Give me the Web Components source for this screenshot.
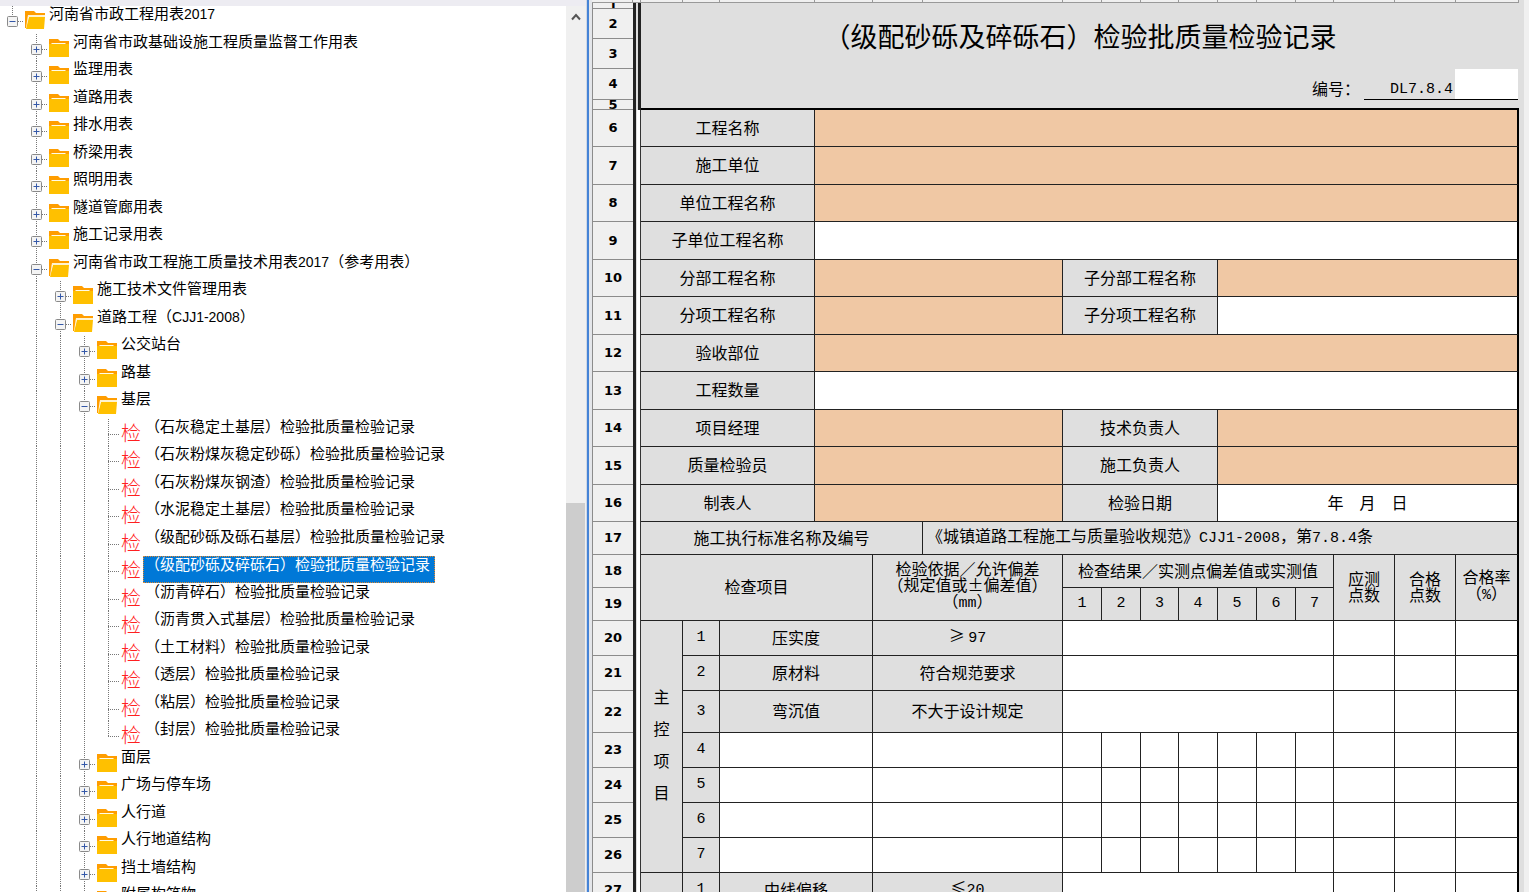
<!DOCTYPE html>
<html lang="zh-CN">
<head>
<meta charset="utf-8">
<title>河南省市政工程用表2017</title>
<style>
  html, body {
    margin: 0;
    height: 100%;
    overflow: hidden;
  }

  body {
    font-family: "Noto Sans CJK SC", "Liberation Sans", sans-serif;
    font-size: 15px;
    color: #000;
    background: #fff;
  }
</style>
</head>
<body>

<split-view>
  <tree-view slot="side">
    <tree-node depth="0" state="open">河南省市政工程用表<span>2017</span></tree-node>
    <tree-node depth="1" state="closed">河南省市政基础设施工程质量监督工作用表</tree-node>
    <tree-node depth="1" state="closed">监理用表</tree-node>
    <tree-node depth="1" state="closed">道路用表</tree-node>
    <tree-node depth="1" state="closed">排水用表</tree-node>
    <tree-node depth="1" state="closed">桥梁用表</tree-node>
    <tree-node depth="1" state="closed">照明用表</tree-node>
    <tree-node depth="1" state="closed">隧道管廊用表</tree-node>
    <tree-node depth="1" state="closed">施工记录用表</tree-node>
    <tree-node depth="1" state="open">河南省市政工程施工质量技术用表<span>2017</span>（参考用表）</tree-node>
    <tree-node depth="2" state="closed">施工技术文件管理用表</tree-node>
    <tree-node depth="2" state="open">道路工程（<span>CJJ1-2008</span>）</tree-node>
    <tree-node depth="3" state="closed">公交站台</tree-node>
    <tree-node depth="3" state="closed">路基</tree-node>
    <tree-node depth="3" state="open">基层</tree-node>
    <tree-node depth="4" state="leaf">（石灰稳定土基层）检验批质量检验记录</tree-node>
    <tree-node depth="4" state="leaf">（石灰粉煤灰稳定砂砾）检验批质量检验记录</tree-node>
    <tree-node depth="4" state="leaf">（石灰粉煤灰钢渣）检验批质量检验记录</tree-node>
    <tree-node depth="4" state="leaf">（水泥稳定土基层）检验批质量检验记录</tree-node>
    <tree-node depth="4" state="leaf">（级配砂砾及砾石基层）检验批质量检验记录</tree-node>
    <tree-node depth="4" state="leaf" selected>（级配砂砾及碎砾石）检验批质量检验记录</tree-node>
    <tree-node depth="4" state="leaf">（沥青碎石）检验批质量检验记录</tree-node>
    <tree-node depth="4" state="leaf">（沥青贯入式基层）检验批质量检验记录</tree-node>
    <tree-node depth="4" state="leaf">（土工材料）检验批质量检验记录</tree-node>
    <tree-node depth="4" state="leaf">（透层）检验批质量检验记录</tree-node>
    <tree-node depth="4" state="leaf">（粘层）检验批质量检验记录</tree-node>
    <tree-node depth="4" state="leaf" last>（封层）检验批质量检验记录</tree-node>
    <tree-node depth="3" state="closed">面层</tree-node>
    <tree-node depth="3" state="closed">广场与停车场</tree-node>
    <tree-node depth="3" state="closed">人行道</tree-node>
    <tree-node depth="3" state="closed">人行地道结构</tree-node>
    <tree-node depth="3" state="closed">挡土墙结构</tree-node>
    <tree-node depth="3" state="closed">附属构筑物</tree-node>
  </tree-view>
  <scroll-bar slot="scroll"></scroll-bar>
  <record-sheet slot="main">
    <span slot="title">（级配砂砾及碎砾石）检验批质量检验记录</span>
    <sheet-code slot="code">DL7.8.4</sheet-code>
  </record-sheet>
</split-view>

<script>
// Two panes with a splitter between them
class SplitView extends HTMLElement {
  constructor() {
    super();
    this.attachShadow({ mode: 'open' });
  }

  connectedCallback() {
    this.shadowRoot.innerHTML = `
      <style>
        :host {
          display: flex;
          height: 100vh;
          overflow: hidden;
        }

        aside {
          flex: 0 0 586px;
          display: flex;
          flex-direction: column;
          min-height: 0;
        }

        .strip {
          flex: none;
          height: 6px;
          background: #edecf2;
        }

        .body {
          flex: 1;
          display: flex;
          min-height: 0;
        }

        .splitter {
          flex: none;
          width: 2px;
          background: #4583d6;
          border-left: 1px solid #cfd8e6;
          border-right: 3px solid #e4e6ea;
        }

        main {
          flex: 1;
          min-width: 0;
          overflow: hidden;
          background: #f0f0f0;
        }
      </style>
      <aside>
        <div class="strip"></div>
        <div class="body">
          <slot name="side"></slot>
          <slot name="scroll"></slot>
        </div>
      </aside>
      <div class="splitter"></div>
      <main><slot name="main"></slot></main>
    `;
  }
}

customElements.define('split-view', SplitView);

// Tree container
class TreeView extends HTMLElement {
  constructor() {
    super();
    this.attachShadow({ mode: 'open' });
  }

  connectedCallback() {
    this.setAttribute('role', 'tree');
    this.shadowRoot.innerHTML = `
      <style>
        :host {
          display: block;
          flex: 1;
          min-width: 0;
          overflow: hidden;
          background: #fff;
        }

        ::slotted(tree-node) {
          height: 28px;
        }

        ::slotted(tree-node:nth-child(even)) {
          height: 27px;
        }
      </style>
      <slot></slot>
    `;
  }
}

customElements.define('tree-view', TreeView);

const FOLDER_CLOSED = `
  <svg width="20" height="18" viewBox="0 0 20 18">
    <path d="M0 0h9l2 2h9v5H0z" fill="#ff9d00"/>
    <path d="M0 5h20v13H0z" fill="#ffc000"/>
    <path d="M2.500 4.500h14" stroke="#fffbe8" stroke-width="1"/>
  </svg>`;

const FOLDER_OPEN = `
  <svg width="20" height="18" viewBox="0 0 20 18">
    <path d="M0 0h9l2 2h9v3H3L1 17H0z" fill="#ff9d00"/>
    <path d="M3 4h17v2H3L1 16z" fill="#fff3d0"/>
    <path d="M4 6h16l-1 12H1z" fill="#ffc000"/>
  </svg>`;

// One row of the tree: rails, toggle, icon, label
class TreeNode extends HTMLElement {
  constructor() {
    super();
    this.attachShadow({ mode: 'open' });
  }

  connectedCallback() {
    const depth = Number(this.getAttribute('depth'));
    const state = this.getAttribute('state');
    const leaf = state === 'leaf';

    let rails = '';
    for (let i = 0; i < depth; i++) {
      rails += `<i class="rail${i ? ' line' : ''}"></i>`;
    }

    const stop = depth === 0 || this.hasAttribute('last');
    const toggle = leaf ? '' : `
      <button aria-label="${state === 'open' ? '折叠' : '展开'}">
        <svg width="11" height="11" viewBox="0 0 11 11">
          <rect x="0.500" y="0.500" width="10" height="10" rx="1" fill="#f4f4f4" stroke="#8a8a8a"/>
          <path d="M2.500 5.500h6${state === 'closed' ? 'M5.500 2.500v6' : ''}" stroke="#3458a8"/>
        </svg>
      </button>`;
    const icon = leaf ? '<b>检</b>' : state === 'open' ? FOLDER_OPEN : FOLDER_CLOSED;

    this.setAttribute('role', 'treeitem');
    this.shadowRoot.innerHTML = `
      <style>
        :host {
          display: flex;
          white-space: nowrap;
        }

        .rail {
          flex: 0 0 24px;
        }

        .line, .own {
          background: repeating-linear-gradient(#777 0 1px, transparent 1px 2px) 12px 0 / 1px 100% no-repeat;
        }

        .own {
          flex: 0 0 24px;
          display: flex;
          align-items: flex-start;
        }

        .own.stop {
          background-size: 1px 16px;
        }

        .own::after {
          content: "";
          flex: 1;
          height: 1px;
          margin-top: 15px;
          background: repeating-linear-gradient(90deg, #777 0 1px, transparent 1px 2px);
        }

        .own.leaf::after {
          margin-left: 12px;
        }

        button {
          flex: none;
          display: flex;
          margin: 10px 0 0 7px;
          padding: 0;
          border: 0;
          background: none;
        }

        .icon {
          flex: 0 0 24px;
          box-sizing: border-box;
          padding: 5px 0 0 1px;
        }

        .icon svg {
          display: block;
        }

        .icon b {
          display: block;
          font-size: 20px;
          font-weight: 300;
          line-height: 18px;
          color: #ff2020;
        }

        .label {
          box-sizing: border-box;
          height: 26px;
          padding-left: 1px;
          line-height: 14px;
        }

        :host([selected]) .label {
          height: 27px;
          margin-left: -1px;
          padding-right: 4px;
          border: 1px dotted #e08830;
          background: #0078d7;
          color: #fff;
        }

        ::slotted(span) {
          font-family: "Liberation Sans", sans-serif;
          font-size: 14px;
        }
      </style>
      ${rails}
      <span class="own${stop ? ' stop' : ''}${leaf ? ' leaf' : ''}">${toggle}</span>
      <span class="icon">${icon}</span>
      <span class="label"><slot></slot></span>
    `;
  }
}

customElements.define('tree-node', TreeNode);

// Vertical scroll bar
class ScrollBar extends HTMLElement {
  constructor() {
    super();
    this.attachShadow({ mode: 'open' });
  }

  connectedCallback() {
    this.shadowRoot.innerHTML = `
      <style>
        :host {
          flex: 0 0 20px;
          display: flex;
          flex-direction: column;
          background: #f0f0f0;
        }

        button {
          display: flex;
          justify-content: center;
          align-items: center;
          height: 22px;
          padding: 0;
          border: 0;
          background: none;
        }

        .space {
          flex: 475;
        }

        .thumb {
          flex: 389;
          margin-right: 1px;
          background: #cdcdcd;
        }
      </style>
      <button aria-label="向上滚动">
        <svg width="10" height="8" viewBox="0 0 10 8">
          <path d="M1 6.500l4-4.500 4 4.500" fill="none" stroke="#555" stroke-width="2"/>
        </svg>
      </button>
      <div class="space"></div>
      <div class="thumb"></div>
    `;
  }
}

customElements.define('scroll-bar', ScrollBar);

// Number of the form, underlined, with an entry box after it
class SheetCode extends HTMLElement {
  constructor() {
    super();
    this.attachShadow({ mode: 'open' });
  }

  connectedCallback() {
    this.shadowRoot.innerHTML = `
      <style>
        :host {
          display: flex;
          justify-content: flex-end;
          height: 31px;
          font-size: 16px;
        }

        label {
          padding: 11px 4px 0 0;
          line-height: 16px;
        }

        div {
          flex: 0 0 154px;
          box-sizing: border-box;
          display: flex;
          justify-content: flex-end;
          margin-right: 1px;
          border-bottom: 1px solid #000;
        }

        span {
          padding: 13px 2px 0 0;
          font-family: "Liberation Mono", monospace;
          font-size: 15px;
          line-height: 16px;
        }

        input {
          width: 63px;
          box-sizing: border-box;
          padding: 0 4px;
          border: 0;
          background: #fff;
        }
      </style>
      <label for="code">编号：</label>
      <div><span><slot></slot></span><input id="code" type="text"></div>
    `;
  }
}

customElements.define('sheet-code', SheetCode);

// Column widths: row header, frame gap, then the cells of the form
const COLUMNS = [41, 8, 42, 37, 95, 58, 50, 140, 39, 39, 38, 39, 39, 39, 38, 61, 61, 63];

const blank = (n) => '<td></td>'.repeat(n);

const row = (number, height, cells) => `
  <tr class="h${height}">
    <th scope="row">${number}</th><td class="gap"></td>${cells}
  </tr>`;

const wide = (label, fill) => `
  <td class="label" colspan="3">${label}</td><td class="${fill} last" colspan="13"></td>`;

const pair = (left, leftFill, right, rightFill, text = '') => `
  <td class="label" colspan="3">${left}</td><td class="${leftFill}" colspan="3"></td>
  <td class="label" colspan="4">${right}</td><td class="${rightFill} last" colspan="6">${text}</td>`;

// The inspection record form
class RecordSheet extends HTMLElement {
  constructor() {
    super();
    this.attachShadow({ mode: 'open' });
  }

  connectedCallback() {
    this.shadowRoot.innerHTML = `
      <style>
        :host {
          display: block;
          margin-right: 5px;
          border-right: 5px solid #dfdfdf;
        }

        table {
          width: 100%;
          table-layout: fixed;
          border-spacing: 0;
          font-size: 16px;
          line-height: 16px;
        }

        th, td {
          box-sizing: border-box;
          padding: 0;
          border: 0 solid #222;
          border-width: 0 1px 1px 0;
          background: #fff;
          text-align: center;
          white-space: nowrap;
        }

        td.last {
          border-right: 2px solid #000;
        }

        th {
          border-color: #8c8c8c;
          border-width: 0 0 1px 1px;
          background: #f0f0f0;
          font-family: "DejaVu Sans", sans-serif;
          font-size: 13px;
          font-weight: bold;
        }

        thead td {
          border-color: #999;
          background: #f0f0f0;
        }

        .gap {
          border: 0;
          background: linear-gradient(90deg, #222 0 3px, #ddd 3px 4px, #fff 4px 7px, #333 7px);
        }

        .top .gap {
          background: linear-gradient(90deg, #222 0 3px, #ddd 3px 5px, #222 5px);
        }

        .head, .label {
          background: #dfdfdf;
        }

        .label, .last {
          padding-bottom: 3px;
        }

        .head {
          border: 0;
        }

        .title {
          font-size: 27px;
          line-height: 32px;
        }

        .edge {
          border-bottom: 2px solid #000;
        }

        .fill {
          background: #f0c8a4;
        }

        .num, .num-text {
          font-family: "Liberation Mono", monospace;
          font-size: 15px;
        }

        .num {
          padding-bottom: 0;
        }

        .left {
          padding-left: 4px;
          text-align: left;
        }

        .tall {
          padding-bottom: 6px;
          line-height: 32px;
        }

        .clip {
          display: flex;
          justify-content: center;
          align-items: center;
          overflow: hidden;
          height: 5px;
        }

        .clip.five {
          height: 9px;
        }

        .h3 { height: 3px; }
        .h6 { height: 6px; }
        .h10 { height: 10px; }
        .h30 { height: 30px; }
        .h31 { height: 31px; }
        .h33 { height: 33px; }
        .h35 { height: 35px; }
        .h37 { height: 37px; }
        .h38 { height: 38px; }
        .h42 { height: 42px; }
      </style>
      <table>
        <colgroup>${COLUMNS.map((w) => `<col style="width: ${w}px">`).join('')}</colgroup>
        <thead>
          <tr class="h3">${blank(18)}</tr>
        </thead>
        <tbody class="top">
          ${row('<div class="clip">1</div>', 6, '<td class="head title" colspan="16" rowspan="3"><slot name="title"></slot></td>')}
          ${row(2, 30, '')}
          ${row(3, 30, '')}
          ${row(4, 31, '<td class="head" colspan="16"><slot name="code"></slot></td>')}
          ${row('<div class="clip five">5</div>', 10, '<td class="head edge" colspan="16"></td>')}
        </tbody>
        <tbody>
          ${row(6, 37, wide('工程名称', 'fill'))}
          ${row(7, 38, wide('施工单位', 'fill'))}
          ${row(8, 37, wide('单位工程名称', 'fill'))}
          ${row(9, 38, wide('子单位工程名称', ''))}
          ${row(10, 37, pair('分部工程名称', 'fill', '子分部工程名称', 'fill'))}
          ${row(11, 38, pair('分项工程名称', 'fill', '子分项工程名称', ''))}
          ${row(12, 37, wide('验收部位', 'fill'))}
          ${row(13, 38, wide('工程数量', ''))}
          ${row(14, 37, pair('项目经理', 'fill', '技术负责人', 'fill'))}
          ${row(15, 38, pair('质量检验员', 'fill', '施工负责人', 'fill'))}
          ${row(16, 37, pair('制表人', 'fill', '检验日期', '', '年　月　日'))}
          ${row(17, 33, `
            <td class="label" colspan="5">施工执行标准名称及编号</td>
            <td class="label left last" colspan="11">《城镇道路工程施工与质量验收规范》<span class="num-text">CJJ1-2008</span>，第<span class="num-text">7.8.4</span>条</td>`)}
          ${row(18, 33, `
            <td class="label" colspan="4" rowspan="2">检查项目</td>
            <td class="label" colspan="2" rowspan="2">检验依据／允许偏差<br>（规定值或±偏差值）<br>（<span class="num-text">mm</span>）</td>
            <td class="label" colspan="7">检查结果／实测点偏差值或实测值</td>
            <td class="label" rowspan="2">应测<br>点数</td>
            <td class="label" rowspan="2">合格<br>点数</td>
            <td class="label last" rowspan="2">合格率<br>（<span class="num-text">%</span>）</td>`)}
          ${row(19, 33, [1, 2, 3, 4, 5, 6, 7].map((n) => `<td class="label num">${n}</td>`).join(''))}
          ${row(20, 35, `
            <td class="label tall" rowspan="7">主<br>控<br>项<br>目</td>
            <td class="label num">1</td><td class="label" colspan="2">压实度</td>
            <td class="label" colspan="2">≥ <span class="num-text">97</span></td>
            <td colspan="7"></td>${blank(2)}<td class="last"></td>`)}
          ${row(21, 35, `
            <td class="label num">2</td><td class="label" colspan="2">原材料</td>
            <td class="label" colspan="2">符合规范要求</td>
            <td colspan="7"></td>${blank(2)}<td class="last"></td>`)}
          ${row(22, 42, `
            <td class="label num">3</td><td class="label" colspan="2">弯沉值</td>
            <td class="label" colspan="2">不大于设计规定</td>
            <td colspan="7"></td>${blank(2)}<td class="last"></td>`)}
          ${[4, 5, 6, 7].map((n) => row(n + 19, 35, `
            <td class="label num">${n}</td><td colspan="2"></td><td colspan="2"></td>${blank(9)}<td class="last"></td>`)).join('')}
          ${row(27, 35, `
            <td class="label"></td><td class="label num">1</td>
            <td class="label" colspan="2">中线偏移</td>
            <td class="label" colspan="2">≤<span class="num-text">20</span></td>
            <td colspan="7"></td>${blank(2)}<td class="last"></td>`)}
        </tbody>
      </table>
    `;
  }
}

customElements.define('record-sheet', RecordSheet);
</script>
</body>
</html>
